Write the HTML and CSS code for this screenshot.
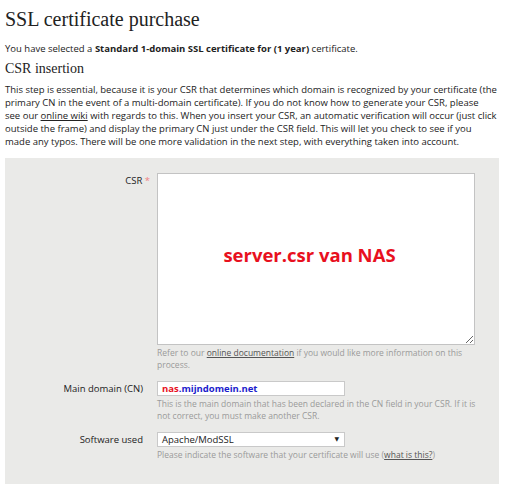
FILE: index.html
```html
<!DOCTYPE html>
<html lang="en">
  <head>
    <meta charset="UTF-8" />
    <title>SSL certificate purchase</title>
    <link rel="stylesheet" href="styles.css">
  </head>
  <body>
    <h1>SSL certificate purchase</h1>

    <p class="intro">
      You have selected a <strong>Standard 1-domain SSL certificate for (1 year)</strong> certificate.
    </p>

    <h2>CSR insertion</h2>

    <p class="lead">
      This step is essential, because it is your CSR that determines which domain is recognized by your certificate (the<br>
      primary CN in the event of a multi-domain certificate). If you do not know how to generate your CSR, please<br>
      see our <a href="#">online wiki</a> with regards to this. When you insert your CSR, an automatic verification will occur (just click<br>
      outside the frame) and display the primary CN just under the CSR field. This will let you check to see if you<br>
      made any typos. There will be one more validation in the next step, with everything taken into account.
    </p>

    <form class="panel">
      <div class="row">
        <label class="label" for="csr">CSR <span class="req">*</span></label>
        <div class="field">
          <div class="csr-box">
            <textarea id="csr" class="csr"></textarea>
            <span class="csr-note">server.csr van NAS</span>
          </div>
          <p class="help">
            Refer to our <a href="#">online documentation</a> if you would like more information on this<br>
            process.
          </p>
        </div>
      </div>

      <div class="row">
        <label class="label">Main domain (CN)</label>
        <div class="field">
          <div class="input domain"><span class="sub">nas</span>.mijndomein.net</div>
          <p class="help">
            This is the main domain that has been declared in the CN field in your CSR. If it is<br>
            not correct, you must make another CSR.
          </p>
        </div>
      </div>

      <div class="row">
        <label class="label">Software used</label>
        <div class="field">
          <div class="input select">
            <span>Apache/ModSSL</span>
            <span class="arrow">&#9660;</span>
          </div>
          <p class="help">
            Please indicate the software that your certificate will use (<a href="#">what is this?</a>)
          </p>
        </div>
      </div>
    </form>
  </body>
</html>
```

FILE: styles.css
```css
* {
  margin: 0;
  padding: 0;
  box-sizing: border-box;
}

body {
  font-family: "Open Sans", "DejaVu Sans", sans-serif;
  font-size: 9.5px;
  color: #222;
  background: #fff;
  padding: 8px 5px;
  width: 506px;
}

a {
  color: inherit;
}

h1 {
  font-family: "Liberation Serif", serif;
  font-weight: normal;
  font-size: 20px;
  line-height: 22px;
  margin-bottom: 12px;
}

.intro {
  line-height: 13px;
  margin-bottom: 6px;
}

h2 {
  font-family: "Liberation Serif", serif;
  font-weight: normal;
  font-size: 14px;
  line-height: 16px;
  margin-bottom: 6px;
}

.lead {
  line-height: 13px;
  margin-right: -6px;
  margin-bottom: 10px;
}

/* Form panel */
.panel {
  background: #eaeae8;
  width: 494px;
  padding: 15px 0 23px;
  display: flex;
  flex-direction: column;
  gap: 10px;
}

.row {
  display: grid;
  grid-template-columns: 145px 318px;
  column-gap: 7px;
}

.label {
  text-align: right;
  font-size: 9.5px;
  line-height: 15px;
  padding-right: 7px;
}

.req {
  color: #f08080;
  margin-right: -7px;
}

.field {
  display: flex;
  flex-direction: column;
}

.help {
  color: #9a9a9a;
  font-size: 8.5px;
  line-height: 12px;
  margin-top: 2px;
  white-space: nowrap;
}

.help a {
  color: #555;
}

.csr-box {
  position: relative;
  height: 172px;
}

.csr {
  display: block;
  width: 318px;
  height: 172px;
  border: 1px solid #c3c3c3;
  background: #fff;
  resize: vertical;
}

.csr-note {
  position: absolute;
  top: 69px;
  left: 0;
  right: 13px;
  text-align: center;
  color: #e8101e;
  font-weight: bold;
  font-size: 18.5px;
  pointer-events: none;
}

.input {
  width: 188px;
  height: 15px;
  background: #fff;
  border: 1px solid #c9c9c9;
  font-size: 9.5px;
  line-height: 13px;
  padding: 0 4px;
}

.domain {
  color: #1c1ccc;
  font-weight: bold;
}

.domain .sub {
  color: #e8101e;
}

.select {
  display: flex;
  justify-content: space-between;
  color: #222;
}

.arrow {
  font-size: 6px;
  padding-right: 1px;
}
```
